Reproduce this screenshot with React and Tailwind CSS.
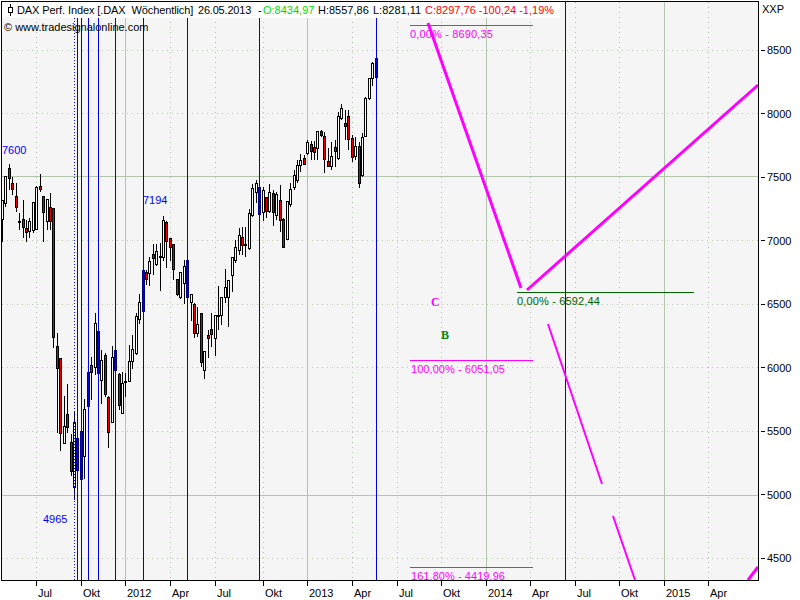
const candles = [
  [376,58,58,77,77,'b'],[372,62,63,78,86,'w'],[369,78,78,98,100,'w'],[365,97,98,136,136,'w'],[362,133,137,175,177,'w'],
  [359,142,146,183,188,'r'],[355,137,146,156,160,'w'],[352,135,138,157,162,'r'],[348,110,116,139,150,'r'],[345,110,123,126,140,'r'],
  [341,104,108,118,120,'w'],[338,112,116,158,160,'w'],[335,140,147,151,167,'r'],[331,142,156,166,170,'w'],[328,148,161,166,167,'r'],
  [324,132,136,159,173,'r'],[321,130,131,135,137,'r'],[317,131,131,148,160,'w'],[314,141,147,152,160,'r'],[311,141,144,151,160,'r'],
  [307,140,142,153,155,'w'],[304,155,158,164,165,'r'],[300,154,160,165,172,'w'],[297,160,165,180,183,'w'],[294,170,175,187,190,'w'],
  [290,183,189,204,207,'w'],[287,201,201,239,240,'w'],[283,218,219,247,248,'r'],[280,185,200,220,232,'r'],[276,192,194,215,220,'w'],
  [273,190,193,212,226,'r'],[269,184,192,211,213,'w'],[266,197,197,211,218,'r'],[263,187,190,212,221,'w'],[259,183,187,214,214,'b'],
  [256,180,183,192,203,'w'],[252,184,188,215,217,'w'],[249,209,213,248,250,'w'],[245,227,244,245,257,'w'],[242,227,237,245,255,'r'],
  [239,228,235,250,255,'w'],[235,240,247,260,263,'w'],[232,257,257,275,292,'w'],[228,280,280,297,327,'w'],[225,269,287,297,303,'w'],
  [221,297,297,315,325,'w'],[218,286,315,316,330,'w'],[215,315,315,338,356,'w'],[211,313,329,334,347,'r'],[208,330,335,338,358,'r'],
  [204,352,351,370,379,'w'],[201,313,313,362,367,'r'],[197,307,324,333,337,'w'],[194,303,304,333,338,'r'],[191,294,294,302,321,'w'],
  [187,260,260,297,297,'b'],[184,260,266,283,304,'w'],[180,272,272,297,299,'w'],[177,279,279,294,296,'r'],[173,244,244,269,280,'r'],
  [170,238,238,247,261,'r'],[166,221,222,241,268,'r'],[163,216,220,257,261,'w'],[160,243,256,257,291,'w'],[156,244,251,264,266,'w'],
  [153,244,254,258,275,'r'],[149,257,261,273,286,'w'],[146,270,272,279,285,'r'],[143,270,270,311,311,'b'],[139,294,302,319,324,'w'],
  [136,313,316,353,355,'w'],[132,335,349,361,369,'w'],[129,345,361,381,381,'w'],[125,373,381,382,397,'w'],[122,372,383,413,414,'w'],
  [119,373,374,405,410,'r'],[115,350,350,370,370,'b'],[112,346,357,422,423,'w'],[108,396,397,432,448,'r'],[105,353,355,394,397,'r'],
  [101,350,360,380,404,'w'],[98,331,331,373,373,'b'],[95,313,323,367,375,'w'],[91,357,365,372,400,'r'],[88,372,372,406,406,'b'],
  [84,399,409,456,479,'w'],[81,431,431,479,479,'b'],[77,438,438,470,470,'b'],[74,411,422,487,500,'w'],[71,434,442,471,476,'r'],
  [67,384,414,427,433,'r'],[64,396,426,443,444,'w'],[60,358,358,433,451,'r'],[57,333,346,368,433,'r'],[53,208,208,337,348,'r'],
  [50,193,207,221,230,'r'],[47,199,199,221,230,'w'],[43,196,196,212,242,'r'],[40,174,186,189,192,'r'],[36,186,187,229,229,'w'],
  [33,202,202,230,233,'w'],[29,218,221,231,238,'w'],[26,220,228,232,242,'r'],[23,200,219,227,238,'r'],[19,213,221,222,230,'w'],
  [16,183,196,207,212,'r'],[12,177,183,189,195,'r'],[9,164,168,178,190,'r'],[5,176,176,203,207,'w'],[2,200,200,219,242,'w'],
];

const fills = { w: '#ffffff', r: '#e00000', b: '#0000e0' };
const blueLines = [77, 81, 88, 98, 115, 143, 187, 259, 376, 565];
const majorV = [125, 307, 486, 664];
const dotV = [36, 81, 170, 215, 263, 352, 397, 441, 530, 575, 619, 708];
const dotH = [50, 113, 240, 304, 367, 431, 558];
const prices = ['8500', '8000', '7500', '7000', '6500', '6000', '5500', '5000', '4500'];
const xTicks = [
  [36, 'Jul'], [81, 'Okt'], [125, '2012'], [170, 'Apr'], [215, 'Jul'], [263, 'Okt'], [307, '2013'], [352, 'Apr'],
  [397, 'Jul'], [441, 'Okt'], [486, '2014'], [530, 'Apr'], [575, 'Jul'], [619, 'Okt'], [664, '2015'], [708, 'Apr'],
];

function Chart() {
  return (
    <svg width="756" height="578" viewBox="0 0 756 578" className="block">
      <g transform="translate(-2 -2)">
        {dotH.map((y) => (
          <line key={y} x1="2" x2="758" y1={y + 0.5} y2={y + 0.5} stroke="#b4c8b0" strokeDasharray="1 4" shapeRendering="crispEdges" />
        ))}
        {dotV.map((x) => (
          <line key={x} x1={x + 0.5} x2={x + 0.5} y1="2" y2="580" stroke="#a8c4a4" strokeDasharray="1 4" shapeRendering="crispEdges" />
        ))}
        {majorV.map((x) => (
          <line key={x} x1={x + 0.5} x2={x + 0.5} y1="2" y2="580" stroke="#b2c6ae" shapeRendering="crispEdges" />
        ))}
        <line x1="2" x2="758" y1="176.5" y2="176.5" stroke="#b2c6ae" shapeRendering="crispEdges" />
        <line x1="2" x2="758" y1="495.5" y2="495.5" stroke="#b2c6ae" shapeRendering="crispEdges" />

        {candles.slice().reverse().map(([x, wt, bt, bb, wb, t]) => (
          <g key={x} shapeRendering="crispEdges">
            <line x1={x + 0.5} x2={x + 0.5} y1={wt} y2={wb} stroke="#000" />
            <rect x={x - 0.5} y={bt + 0.5} width="2" height={Math.max(bb - bt, 1)} fill={fills[t]} stroke={t === 'b' ? '#000080' : '#000'} />
          </g>
        ))}

        <line x1="74.5" x2="74.5" y1="18" y2="580" stroke="#0000e0" strokeDasharray="1 2" shapeRendering="crispEdges" />
        {blueLines.map((x) => (
          <line key={x} x1={x + 0.5} x2={x + 0.5} y1="2" y2="580" stroke="#0000e0" shapeRendering="crispEdges" />
        ))}

        <line x1="410" x2="533" y1="25.5" y2="25.5" stroke="#ff00ff" shapeRendering="crispEdges" />
        <line x1="410" x2="533" y1="360.5" y2="360.5" stroke="#ff00ff" shapeRendering="crispEdges" />
        <line x1="410" x2="533" y1="567.5" y2="567.5" stroke="#ff00ff" shapeRendering="crispEdges" />
        <line x1="517" x2="694" y1="292.5" y2="292.5" stroke="#006400" shapeRendering="crispEdges" />

        <line x1="428" y1="23" x2="521" y2="288" stroke="#ff00ff" strokeWidth="3" />
        <line x1="527" y1="290" x2="758" y2="85" stroke="#ff00ff" strokeWidth="3" />
        <line x1="548" y1="324" x2="602" y2="484" stroke="#ff00ff" strokeWidth="2" />
        <line x1="613" y1="516" x2="635" y2="580" stroke="#ff00ff" strokeWidth="2" />
        <line x1="748" y1="580" x2="758" y2="567" stroke="#ff00ff" strokeWidth="3" />
      </g>
    </svg>
  );
}

function Note({ className, children }) {
  return <span className={`absolute leading-[14px] whitespace-pre ${className}`}>{children}</span>;
}

export default function App() {
  return (
    <div className="w-[800px] h-[600px] bg-white flex flex-col overflow-hidden text-[11px] text-black font-['Liberation_Sans',sans-serif] pt-px pl-px">
      <div className="flex h-[580px] shrink-0">
        <div className="relative w-[758px] h-[580px] border border-black bg-[#f5f5f5] shrink-0">
          <Chart />

          <div className="absolute left-0 top-0 w-[558px] h-[16px] bg-white flex items-center whitespace-pre leading-[16px]">
            <svg width="7" height="13" viewBox="0 0 7 13" className="ml-[5px] mr-[3px] shrink-0">
              <path d="M3.5 0V12" stroke="#000" />
              <rect x="1.5" y="3.5" width="4" height="5" fill="#fff" stroke="#000" />
            </svg>
            <span className="w-[181px] shrink-0 tracking-[-0.1px]">DAX Perf. Index [.DAX  Wöchentlich]</span>
            <span className="w-[60px] shrink-0 tracking-[-0.2px]">26.05.2013</span>
            <span className="w-[5px] shrink-0">-</span>
            <span className="w-[55px] shrink-0 text-[#00dc00]">O:8434,97</span>
            <span className="w-[55px] shrink-0">H:8557,86</span>
            <span className="w-[52px] shrink-0">L:8281,11</span>
            <span className="text-[#ff0000]">C:8297,76 -100,24 -1,19%</span>
          </div>

          <Note className="left-[2px] top-[18px]">© www.tradesignalonline.com</Note>
          <Note className="left-0 top-[141px] text-[#0000ff]">7600</Note>
          <Note className="left-[141px] top-[191px] text-[#0000ff]">7194</Note>
          <Note className="left-[41px] top-[510px] text-[#0000ff]">4965</Note>
          <Note className="left-[408px] top-[25px] text-[#ff00ff] tracking-[0.15px]">0,00% - 8690,35</Note>
          <Note className="left-[409px] top-[360px] text-[#ff00ff] tracking-[0.06px]">100,00% - 6051,05</Note>
          <Note className="left-[409px] top-[567px] text-[#ff00ff] tracking-[0.06px]">161,80% - 4419,96</Note>
          <Note className="left-[515px] top-[292px] text-[#006400] tracking-[0.15px]">0,00% - 6592,44</Note>
          <Note className="left-[429px] top-[293px] font-bold text-[#ff00ff] font-['Liberation_Serif',serif] text-[12px]">C</Note>
          <Note className="left-[439px] top-[326px] font-bold text-[#008000] font-['Liberation_Serif',serif] text-[12px]">B</Note>
        </div>

        <div className="flex-1 flex flex-col">
          <div className="h-[42px] shrink-0 pl-[3px] pt-px leading-[14px]">XXP</div>
          {prices.map((p) => (
            <div key={p} className="h-[63.5px] shrink-0 flex items-start">
              <div className="flex items-center h-[14px]">
                <span className="w-[4px] h-px bg-black ml-[2px] mr-[2px]" />
                <span className="leading-[14px]">{p}</span>
              </div>
            </div>
          ))}
        </div>
      </div>

      <div className="flex pl-[35px] h-[19px]">
        {xTicks.map(([x, label], i) => (
          <div
            key={x}
            className="shrink-0"
            style={{ width: (xTicks[i + 1] ? xTicks[i + 1][0] : x + 45) - x }}
          >
            <div className="w-px h-[5px] bg-black" />
            <div className="pl-[2px] leading-[14px]">{label}</div>
          </div>
        ))}
      </div>
    </div>
  );
}
